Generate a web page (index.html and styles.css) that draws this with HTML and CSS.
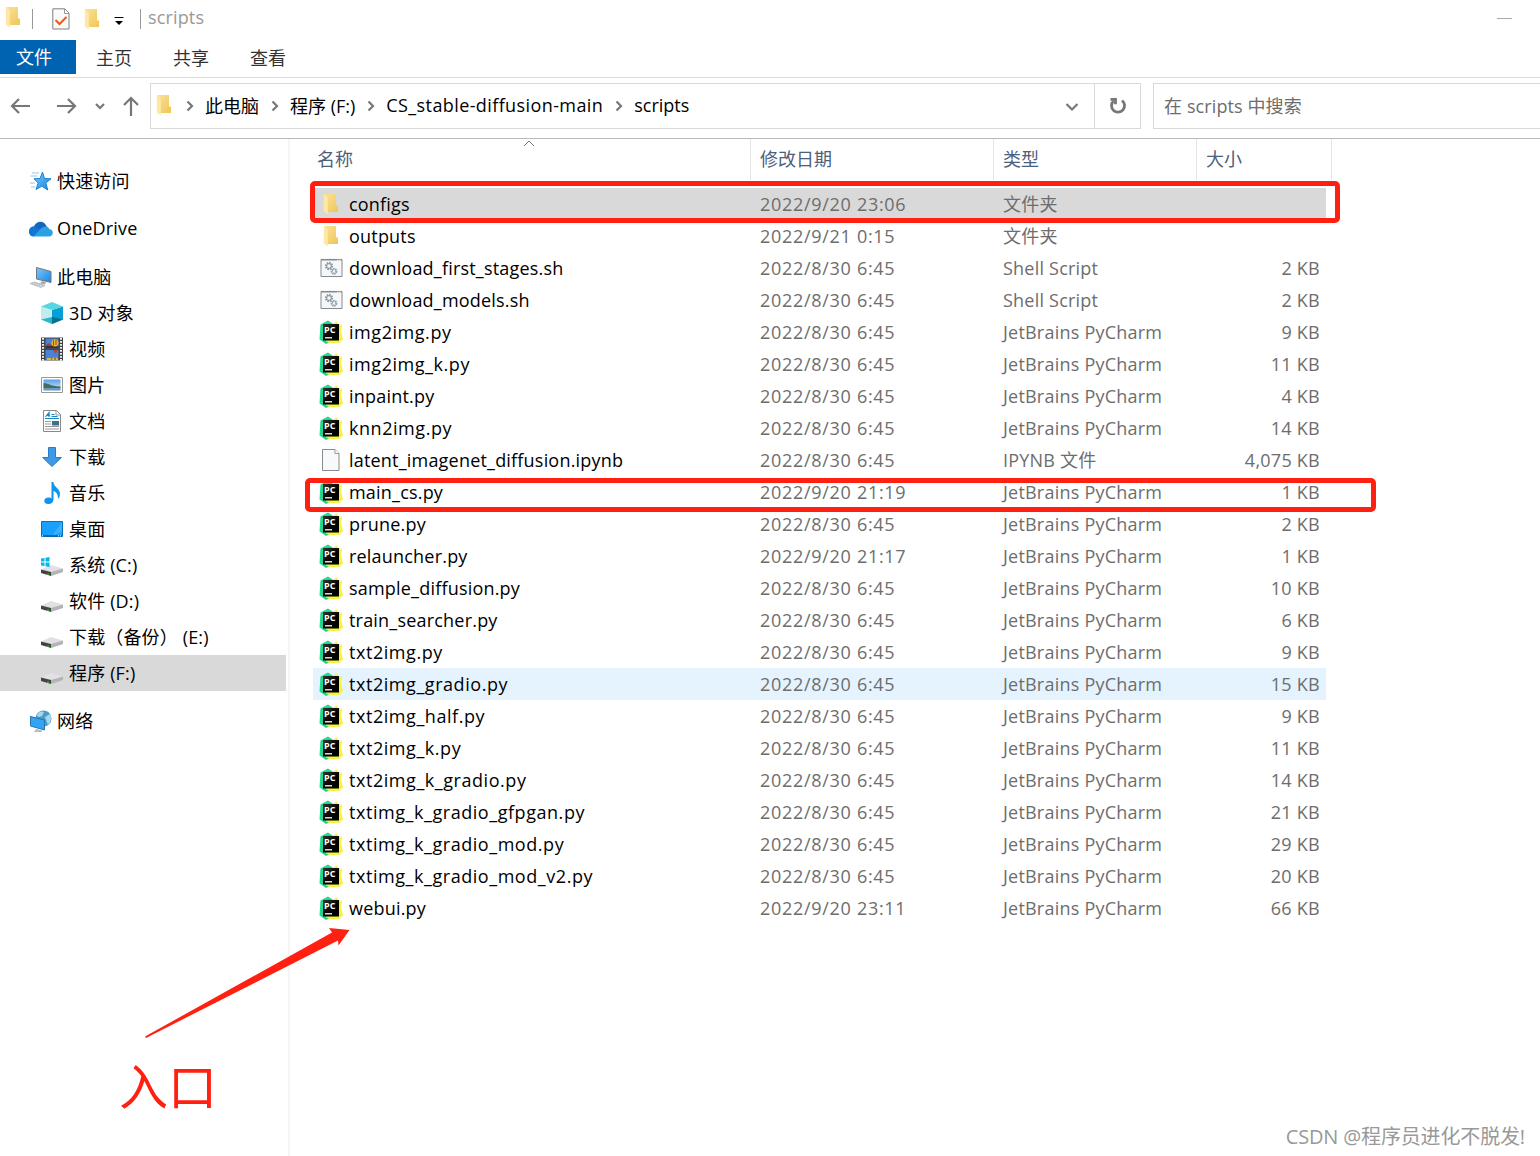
FILE: index.html
```html
<!DOCTYPE html>
<html lang="zh-CN">
<head>
  <meta charset="utf-8">
  <title>scripts</title>
  <link rel="stylesheet" href="styles.css">
</head>
<body>
  <svg class="defs" width="0" height="0">
    <defs>
      <linearGradient id="gold" x1="0" x2="1" y1="0" y2="1">
        <stop offset="0" stop-color="#fbe29a"/><stop offset="1" stop-color="#efc558"/>
      </linearGradient>
      <linearGradient id="blue" x1="0" x2="1" y1="0" y2="1">
        <stop offset="0" stop-color="#7cc8ff"/><stop offset="1" stop-color="#1487e0"/>
      </linearGradient>
      <linearGradient id="sky" x1="0" x2="0" y1="0" y2="1">
        <stop offset="0" stop-color="#5a9fe8"/><stop offset="1" stop-color="#dcecf8"/>
      </linearGradient>
      <linearGradient id="black" x1="0" x2="1" y1="0" y2="1">
        <stop offset="0" stop-color="#333"/><stop offset=".6" stop-color="#000"/>
      </linearGradient>
    </defs>
    <symbol id="folder" viewBox="0 0 16 22">
      <path d="M1 1h12v11.500h2V19H4.500z" fill="url(#gold)"/>
      <path d="M.8 1l4 3.500v17l-4-3z" fill="#ffe8a6"/>
    </symbol>
    <symbol id="check" viewBox="0 0 18 22">
      <path d="M.8.8h12l4.200 4.200v16H.8z" fill="#fafafa" stroke="#808080"/>
      <path d="M12.500 1v4.500H17" fill="#fff" stroke="#999"/>
      <path d="M3.500 12l4 4L14.500 9" fill="none" stroke="#f05a10" stroke-width="2"/>
    </symbol>
    <symbol id="star" viewBox="0 0 24 24">
      <path d="M13.500 3l2 6.500 6.500.3-5.200 4.200 2 7-6-3.800L7 20.500l2.200-6.500L5 9.800l6-.3z" fill="url(#blue)" stroke="#1683d0"/>
      <path d="M3 4h7M1.500 7h7M1 14h5M2 18h4" stroke="#8ac6f3"/>
    </symbol>
    <symbol id="cloud" viewBox="0 0 24 24">
      <path d="M3 19a5 5 0 0 1 2-9.500C7 4 15 2 18 10z" fill="#1565c0"/>
      <path d="M0 14.500C0 11 3 9.200 6 9.500L16 15 4.500 19.500C2 19.500 0 17.500 0 14.500z" fill="#0f78d4"/>
      <path d="M11 12.500c3-4 8-3.500 9.200-.6 5 .5 4.700 7.600-.2 7.600H4.500z" fill="#2ca0e6"/>
    </symbol>
    <symbol id="pc" viewBox="0 0 24 24">
      <path d="M7.500 2.500l14.500 4v11L7.500 14z" fill="url(#blue)" stroke="#777"/>
      <path d="M13 16l4 1-1 2.500-5-1z" fill="#aaa"/>
      <path d="M1 18.500l4-1.500 11 3.500-4 2z" fill="#dce0e4" stroke="#a5adb5" stroke-width=".7"/>
      <path d="M3 18.500l9 2.800M5 17.800l9 2.700" stroke="#9da6ae" stroke-width=".7" stroke-dasharray="1.500 1"/>
    </symbol>
    <symbol id="cube" viewBox="0 0 24 24">
      <path d="M1 5.500L12 9v14L1 18.500z" fill="#c0eeee"/>
      <path d="M23 5.500L12 9v14l11-4.500z" fill="#06a0d6"/>
      <path d="M1 5.500L12 1l11 4.500L12 9z" fill="#57d6df"/>
      <path d="M12 16l11 2.500L12 23z" fill="#08718f"/>
      <path d="M12 16L1 18.500 12 23z" fill="#28b8c6"/>
    </symbol>
    <symbol id="video" viewBox="0 0 24 24">
      <path d="M1 .5h22v23H1z" fill="#444"/>
      <path d="M5.500 1.500h13v10h-13zM5.500 13h13v10h-13z" fill="#4b81d8"/>
      <path d="M5.500 8.500h13v3h-13z" fill="#39352e"/>
      <path d="M3 1v23M21 1v23" stroke="#eee" stroke-width="2" stroke-dasharray="1.700 1.300"/>
      <circle cx="15" cy="6" r="3.500" fill="#edb625"/><path d="M13.500 3.500v5M16 3v5" stroke="#9a431e"/>
      <path d="M6 9c2-4 4-3 5 0z" fill="#c22b38"/><path d="M13 13h5l-2.500 4z" fill="#b64728"/>
      <path d="M12 23c0-4 6-4 6 0z" fill="#edb625"/><path d="M7 21h4v2H7z" fill="#d8b93d"/><path d="M15 20v3" stroke="#67452a"/>
    </symbol>
    <symbol id="image" viewBox="0 0 24 24">
      <path d="M1.500 4.500h21v15h-21z" fill="#fff" stroke="#999"/>
      <path d="M3.500 6.500h17v11h-17z" fill="url(#sky)"/>
      <path d="M3.500 10c5 0 6 3 17 3.500V15h-17z" fill="#416e60"/>
      <path d="M3.500 15h17v2.500h-17z" fill="#6b9cbb"/>
    </symbol>
    <symbol id="doc" viewBox="0 0 24 24">
      <path d="M3.500 1.500h13l4 4v17h-17z" fill="#fff" stroke="#8a8a8a"/>
      <path d="M16 2v4h4" fill="none" stroke="#999"/>
      <path d="M5.500 8L9 3.500V8M7 6.500h3M11.500 5.500h3M11.500 7.500h6M5 9.500h14" stroke="#178ac5" stroke-width="1.200" fill="none"/>
      <path d="M5 12.500h6M5 15h6M5 17.500h14M5 20h14" stroke="#999"/>
      <path d="M12 12h7v4.500h-7z" fill="#416e8c"/>
    </symbol>
    <symbol id="down" viewBox="0 0 24 24">
      <path d="M8.500 2.500h7v10h6L12 21.500l-9.300-9h5.800z" fill="#3f99e4" stroke="#2b7cc4"/>
    </symbol>
    <symbol id="note" viewBox="0 0 24 24">
      <path d="M11.500 1h2c0 5 6.500 6 6.500 12 0 2-1 4-2 5 0-5-1.500-7-4.500-8v8c0 3-2 5-5.500 5-5 0-5-6.500.5-6.500 1.500 0 2.500.3 3 .7z" fill="#0c96ed"/>
    </symbol>
    <symbol id="desktop" viewBox="0 0 24 24">
      <path d="M1.500 4.500h21v15h-21z" fill="#18a0fc" stroke="#0872b9"/>
      <path d="M22 5v10L12 19z" fill="#3bb0ff"/>
      <path d="M2 18.800h20" stroke="#07548a"/><path d="M2 18.800h2M18 18.800h3" stroke="#fff" stroke-dasharray="1 1"/>
    </symbol>
    <symbol id="disk" viewBox="0 0 24 24">
      <path d="M1 16.500l10-4.500 12 3.500-12 4.500z" fill="#e1e1e3"/>
      <path d="M1 16.500L11 19v4L1 20z" fill="#444"/>
      <path d="M11 19l12-3.500V19l-12 4z" fill="#b4b4b7"/>
      <path d="M8 20.500v1.500" stroke="#37c837" stroke-width="1.500"/>
    </symbol>
    <symbol id="windisk" viewBox="0 0 24 24">
      <use href="#disk" width="24" height="24"/>
      <path d="M1 5.500l3.500-.5v3.500H1zM5.500 4.800L9.500 4v4.500h-4zM1 9.500h3.500V13L1 12.500zM5.500 9.500h4V14l-4-.7z" fill="#00b7f0"/>
    </symbol>
    <symbol id="network" viewBox="0 0 24 24">
      <circle cx="14.500" cy="9.500" r="8" fill="#4b9dc6"/>
      <path d="M8 7c1-5 6-5 7-4l-2 4-3 1zM16 8l5-3c2 3 1 8-2 11z" fill="#a5d8ed"/>
      <path d="M1.500 7.500l14 3.500v10l-14-4z" fill="#35a3f4" stroke="#2476b0"/>
      <path d="M7 20l6 1.500v1.500H5z" fill="#bbb"/>
    </symbol>
    <symbol id="shell" viewBox="0 0 24 24">
      <path d="M1 3.500h21v17H1z" fill="#f6f7f8" stroke="#838b92"/>
      <path d="M1 3.700h21" stroke="#838b92" stroke-width="1.600"/><path d="M17 4.200h4" stroke="#fff" stroke-dasharray="1 .700"/>
      <circle cx="9" cy="10" r="3" fill="none" stroke="#939ca4" stroke-width="2.400" stroke-dasharray="1.500 .8"/>
      <circle cx="9" cy="10" r="2.500" fill="none" stroke="#939ca4"/>
      <circle cx="14" cy="15.300" r="2.300" fill="none" stroke="#8aa1b4" stroke-width="2.200" stroke-dasharray="1.300 .5"/>
    </symbol>
    <symbol id="blank" viewBox="0 0 24 24">
      <path d="M2.500 1.500h12.500l4 4v17H2.500z" fill="#f8f9fa" stroke="#8a8a8a"/>
      <path d="M15 1.500v4h4" fill="#fff" stroke="#999"/>
    </symbol>
    <symbol id="pycharm" viewBox="0 0 24 24">
      <path d="M1.500 4.500L9 .5l6 4L11 22l-4 2-6.500-4.500z" fill="#21d789"/>
      <path d="M14 4l3.500-3L19 4l4 1-1 6 2 8-3.500 4H10l-3-2z" fill="#f5f244"/>
      <path d="M4 4h16v16.500H4z" fill="url(#black)"/>
      <path d="M6 17.800h7" stroke="#fff" stroke-width="1.300"/>
    </symbol>
  </svg>

  <header class="titlebar">
    <svg class="folder"><use href="#folder"/></svg>
    <span class="divider first"></span>
    <svg class="check"><use href="#check"/></svg>
    <svg class="folder second"><use href="#folder"/></svg>
    <svg class="dropdown" viewBox="0 0 10 10"><path d="M.5 1.500h9" stroke="#000"/><path d="M1 5h8L5 9z"/></svg>
    <span class="divider"></span>
    <span class="title">scripts</span>
    <span class="minimize"></span>
  </header>

  <nav class="tabs">
    <div class="tab active">文件</div>
    <div class="tab">主页</div>
    <div class="tab">共享</div>
    <div class="tab">查看</div>
  </nav>

  <div class="toolbar">
    <svg class="arrow" viewBox="0 0 20 20"><path d="M20 10H2M9 3l-7 7 7 7"/></svg>
    <svg class="arrow forward" viewBox="0 0 20 20"><path d="M0 10h18M11 3l7 7-7 7"/></svg>
    <svg class="recent" viewBox="0 0 10 10"><path d="M1 3l4 4 4-4"/></svg>
    <svg class="up" viewBox="0 0 16 20"><path d="M8 20V2M1 9l7-7 7 7"/></svg>
    <div class="address">
      <svg class="folder"><use href="#folder"/></svg>
      <svg class="sep" viewBox="0 0 8 12"><path d="M1.500 1.500L6 6l-4.500 4.500"/></svg>
      <span>此电脑</span>
      <svg class="sep" viewBox="0 0 8 12"><path d="M1.500 1.500L6 6l-4.500 4.500"/></svg>
      <span>程序 (F:)</span>
      <svg class="sep" viewBox="0 0 8 12"><path d="M1.500 1.500L6 6l-4.500 4.500"/></svg>
      <span class="wide">CS_stable-diffusion-main</span>
      <svg class="sep" viewBox="0 0 8 12"><path d="M1.500 1.500L6 6l-4.500 4.500"/></svg>
      <span>scripts</span>
      <svg class="expand" viewBox="0 0 14 10"><path d="M1.500 2L7 7.500 12.500 2"/></svg>
    </div>
    <div class="refresh">
      <svg viewBox="0 0 18 18"><path d="M4.500 4A6.500 6.500 0 1 0 13 3.500"/><path d="M1.500 2.300h5v5"/></svg>
    </div>
    <div class="search">在 scripts 中搜索</div>
  </div>

  <div class="content">
    <aside class="sidebar">
      <div class="item root"><svg><use href="#star"/></svg><span>快速访问</span></div>
      <div class="item root"><svg><use href="#cloud"/></svg><span>OneDrive</span></div>
      <div class="item root open"><svg><use href="#pc"/></svg><span>此电脑</span></div>
      <div class="item"><svg><use href="#cube"/></svg><span>3D 对象</span></div>
      <div class="item"><svg><use href="#video"/></svg><span>视频</span></div>
      <div class="item"><svg><use href="#image"/></svg><span>图片</span></div>
      <div class="item"><svg><use href="#doc"/></svg><span>文档</span></div>
      <div class="item"><svg><use href="#down"/></svg><span>下载</span></div>
      <div class="item"><svg><use href="#note"/></svg><span>音乐</span></div>
      <div class="item"><svg><use href="#desktop"/></svg><span>桌面</span></div>
      <div class="item"><svg><use href="#windisk"/></svg><span>系统 (C:)</span></div>
      <div class="item"><svg><use href="#disk"/></svg><span>软件 (D:)</span></div>
      <div class="item"><svg><use href="#disk"/></svg><span>下载（备份） (E:)</span></div>
      <div class="item selected"><svg><use href="#disk"/></svg><span>程序 (F:)</span></div>
      <div class="item root network"><svg><use href="#network"/></svg><span>网络</span></div>
    </aside>

    <main class="files">
      <div class="head">
        <div>名称<svg class="sort" viewBox="0 0 12 7"><path d="M1 6l5-5 5 5"/></svg></div>
        <div>修改日期</div>
        <div>类型</div>
        <div>大小</div>
      </div>
      <div id="list"></div>
    </main>
  </div>

  <div class="mark mark-configs"></div>
  <div class="mark mark-main"></div>
  <svg class="pointer" viewBox="0 0 206 118"><path d="M0 116.500L187 12.500l-3-4.500L204.500 10 193.500 25.500l-.5-5L1 118z"/></svg>
  <div class="entry">入口</div>
  <div class="watermark">CSDN @程序员进化不脱发!</div>

  <script>
    var py = "JetBrains PyCharm";
    var old = "2022/8/30 6:45";
    var files = [
      ["folder", "configs", "2022/9/20 23:06", "文件夹", ""],
      ["folder", "outputs", "2022/9/21 0:15", "文件夹", ""],
      ["shell", "download_first_stages.sh", old, "Shell Script", "2 KB"],
      ["shell", "download_models.sh", old, "Shell Script", "2 KB"],
      ["pycharm", "img2img.py", old, py, "9 KB"],
      ["pycharm", "img2img_k.py", old, py, "11 KB"],
      ["pycharm", "inpaint.py", old, py, "4 KB"],
      ["pycharm", "knn2img.py", old, py, "14 KB"],
      ["blank", "latent_imagenet_diffusion.ipynb", old, "IPYNB 文件", "4,075 KB"],
      ["pycharm", "main_cs.py", "2022/9/20 21:19", py, "1 KB"],
      ["pycharm", "prune.py", old, py, "2 KB"],
      ["pycharm", "relauncher.py", "2022/9/20 21:17", py, "1 KB"],
      ["pycharm", "sample_diffusion.py", old, py, "10 KB"],
      ["pycharm", "train_searcher.py", old, py, "6 KB"],
      ["pycharm", "txt2img.py", old, py, "9 KB"],
      ["pycharm", "txt2img_gradio.py", old, py, "15 KB"],
      ["pycharm", "txt2img_half.py", old, py, "9 KB"],
      ["pycharm", "txt2img_k.py", old, py, "11 KB"],
      ["pycharm", "txt2img_k_gradio.py", old, py, "14 KB"],
      ["pycharm", "txtimg_k_gradio_gfpgan.py", old, py, "21 KB"],
      ["pycharm", "txtimg_k_gradio_mod.py", old, py, "29 KB"],
      ["pycharm", "txtimg_k_gradio_mod_v2.py", old, py, "20 KB"],
      ["pycharm", "webui.py", "2022/9/20 23:11", py, "66 KB"]
    ];
    var html = "";
    files.forEach(function (f) {
      var state = f[1] === "configs" ? " selected" : f[1] === "txt2img_gradio.py" ? " hover" : "";
      var wide = /img|gradio/.test(f[1]) ? " wide" : "";
      var label = f[0] === "pycharm" ? '<text x="5" y="12.500" class="pc-text">PC</text>' : "";
      html += '<div class="row' + state + '">' +
        '<div class="name' + wide + '"><svg class="icon-' + f[0] + '"><use href="#' + f[0] + '"/>' + label + '</svg><span>' + f[1] + '</span></div>' +
        '<div class="date">' + f[2] + '</div>' +
        '<div class="type">' + f[3] + '</div>' +
        '<div class="size">' + f[4] + '</div></div>';
    });
    document.getElementById("list").innerHTML = html;
  </script>
</body>
</html>
```

FILE: styles.css
```css
* {
  box-sizing: border-box;
}

body {
  margin: 0;
  width: 1540px;
  height: 1156px;
  position: relative;
  overflow: hidden;
  background-color: #fff;
  color: #000;
  font-family: "Open Sans", "Noto Sans CJK SC", sans-serif;
  font-size: 18px;
  white-space: nowrap;
}

svg {
  flex: none;
  fill: none;
}

.defs {
  position: absolute;
}

.pc-text {
  font: bold 9px "Open Sans", sans-serif;
  letter-spacing: 0;
  fill: #fff;
}

.folder {
  width: 16px;
  height: 22px;
}

/* title bar */
.titlebar {
  display: flex;
  align-items: center;
  height: 40px;
  padding: 0 28px 4px 5px;
}

.titlebar .folder {
  margin-top: -2px;
}

.titlebar .folder.second {
  margin-top: 2px;
}

.divider {
  width: 1px;
  height: 20px;
  margin-top: 2px;
  background-color: #999;
}

.divider.first {
  margin: 2px 19px 0 11px;
}

.check {
  width: 18px;
  height: 22px;
  margin: 2px 14px 0 0;
}

.dropdown {
  width: 10px;
  height: 10px;
  margin: 5px 16px 0 14px;
}

.dropdown path {
  fill: #000;
}

.title {
  margin: -2px 0 0 7px;
  letter-spacing: 0.15px;
  color: #999;
}

.minimize {
  width: 15px;
  height: 1px;
  margin-left: auto;
  background-color: #aaa;
}

/* ribbon */
.tabs {
  display: flex;
  height: 38px;
  border-bottom: 1px solid #dadbdc;
}

.tab {
  width: 77px;
  height: 34px;
  padding-left: 20px;
  line-height: 36px;
  color: #333;
}

.tab.active {
  width: 76px;
  padding-left: 16px;
  line-height: 34px;
  background-color: #0063b1;
  color: #fff;
}

/* address bar */
.toolbar {
  display: flex;
  align-items: center;
  height: 61px;
  padding: 0 0 4px 10px;
  border-bottom: 1px solid #b9b9b9;
}

.toolbar svg {
  stroke: #777;
  stroke-width: 2.2;
}

.toolbar .folder {
  stroke: none;
  margin: -2px 14px 0 0;
}

.arrow {
  width: 20px;
  height: 20px;
  margin-right: 27px;
}

.arrow.forward {
  margin-right: 18px;
}

.recent {
  width: 10px;
  height: 10px;
  margin-right: 18px;
}

.up {
  width: 16px;
  height: 20px;
  margin-right: 11px;
}

.address {
  display: flex;
  align-items: center;
  width: 945px;
  height: 46px;
  padding: 0 15px 0 5px;
  border: 1px solid #d9d9d9;
}

.address span {
  margin-top: -2px;
}

.address .sep {
  width: 8px;
  height: 12px;
  margin-right: 11px;
}

.address span + .sep {
  margin-left: 12px;
}

.address .wide {
  letter-spacing: 0.4px;
}

.expand {
  width: 14px;
  height: 10px;
  margin: 2px 0 0 auto;
}

.refresh {
  display: flex;
  align-items: center;
  justify-content: center;
  width: 46px;
  height: 46px;
  margin-right: 12px;
  border: 1px solid #d9d9d9;
  border-left: none;
}

.refresh svg {
  width: 18px;
  height: 18px;
  stroke-width: 2.8;
}

.search {
  flex: 1;
  height: 46px;
  padding-left: 10px;
  line-height: 44px;
  letter-spacing: 0.1px;
  border: 1px solid #d9d9d9;
  border-right: none;
  color: #6d6d6d;
}

/* body */
.content {
  display: flex;
  height: 1017px;
}

.sidebar {
  width: 290px;
  padding-top: 24px;
  border-right: 2px solid #f5f5f5;
  letter-spacing: 0.15px;
}

.item {
  display: flex;
  align-items: center;
  width: 286px;
  height: 36px;
  padding-left: 40px;
}

.item span {
  margin-top: -2px;
}

.item svg {
  width: 24px;
  height: 24px;
  margin-right: 5px;
}

.item.root {
  padding-left: 28px;
  margin-bottom: 12px;
}

.item.root svg {
  position: relative;
  left: 1px;
}

.item.open {
  margin-bottom: 0;
}

.item.network {
  margin-top: 12px;
}

.item.selected {
  background-color: #d9d9d9;
}

.files {
  padding-left: 23px;
}

.head,
.row {
  display: grid;
  grid-template-columns: 438px 243px 203px 135px;
}

.head {
  height: 41px;
  margin-bottom: 8px;
  color: #4c607a;
}

.head div {
  position: relative;
  padding-left: 9px;
  line-height: 41px;
  border-right: 1px solid #e5e5e5;
}

.head div:first-child {
  padding-left: 4px;
}

.sort {
  position: absolute;
  left: 210px;
  top: 1px;
  width: 12px;
  height: 7px;
  stroke: #777;
}

.row {
  width: 1013px;
  height: 32px;
  line-height: 32px;
  color: #6d6d6d;
}

.row.selected {
  background-color: #d9d9d9;
}

.row.hover {
  background-color: #e5f3ff;
}

.name {
  display: flex;
  align-items: center;
  padding-left: 6px;
  letter-spacing: 0.2px;
  color: #000;
}

.name.wide {
  letter-spacing: 0.55px;
}

.name svg {
  width: 24px;
  height: 24px;
  margin-right: 6px;
}

.name .icon-folder {
  width: 16px;
  height: 22px;
  margin: 0 10px 0 4px;
}

.name .icon-shell,
.name .icon-blank {
  margin: 0 5px 0 1px;
}

.date,
.type {
  padding-left: 9px;
}

.date {
  letter-spacing: 0.7px;
}

.type {
  letter-spacing: 0.22px;
}

.size {
  width: 123px;
  letter-spacing: 0.25px;
  text-align: right;
}

/* annotations over the window */
.mark {
  position: absolute;
  border: 5px solid #ff2012;
  border-radius: 5px;
}

.mark-configs {
  left: 310px;
  top: 181px;
  width: 1030px;
  height: 42px;
}

.mark-main {
  left: 305px;
  top: 478px;
  width: 1071px;
  height: 34px;
}

.pointer {
  position: absolute;
  left: 145px;
  top: 920px;
  width: 206px;
  height: 118px;
}

.pointer path {
  fill: #ff2012;
}

.entry {
  position: absolute;
  left: 119px;
  top: 1051px;
  font-size: 49px;
  line-height: 70px;
  color: #ff2012;
}

.watermark {
  position: absolute;
  right: 15px;
  bottom: 5px;
  font-size: 20px;
  line-height: 28px;
  letter-spacing: -0.15px;
  color: #999;
}
```
